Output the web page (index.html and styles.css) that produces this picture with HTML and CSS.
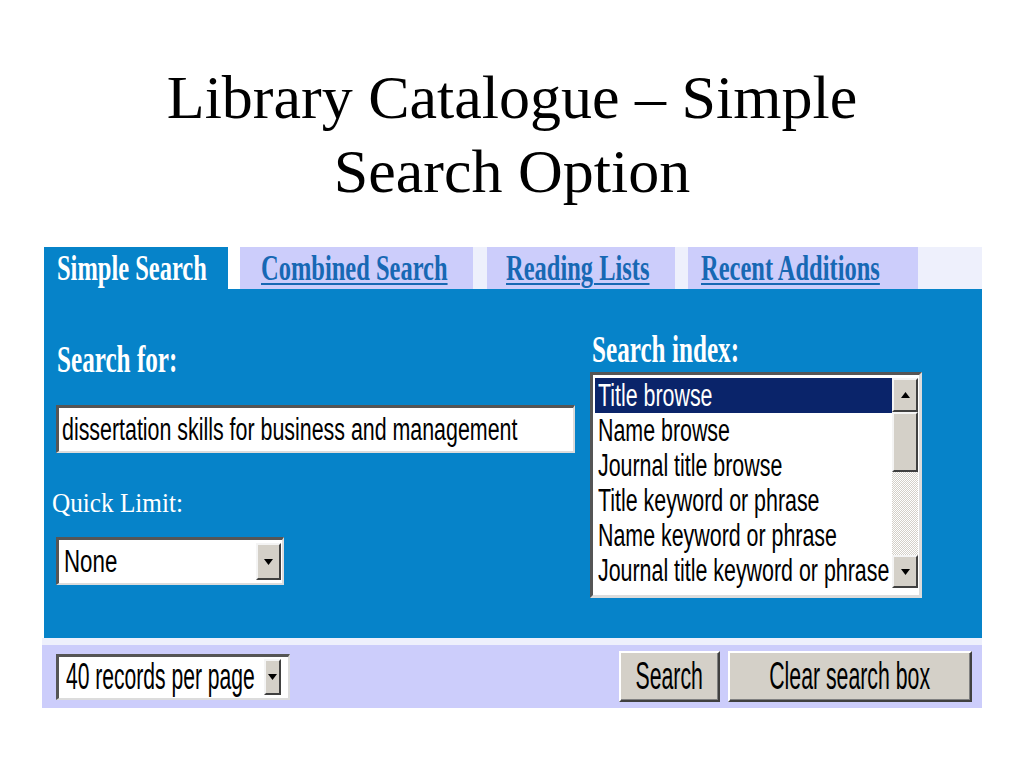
FILE: index.html
```html
<!DOCTYPE html>
<html lang="en">
<head>
    <meta charset="UTF-8">
    <title>Library Catalogue – Simple Search Option</title>
    <link rel="stylesheet" href="styles.css">
</head>
<body>
    <h1 class="title">Library Catalogue – Simple<br>Search Option</h1>

    <div class="catalogue">
        <div class="tabs">
            <div class="tab tab-current"><span class="squeeze">Simple Search</span></div>
            <div class="tab-gap tab-gap-white"></div>
            <div class="tab tab-combined"><a class="squeeze" href="#">Combined Search</a></div>
            <div class="tab-gap tab-gap-14"></div>
            <div class="tab tab-reading"><a class="squeeze" href="#">Reading Lists</a></div>
            <div class="tab-gap tab-gap-13"></div>
            <div class="tab tab-recent"><a class="squeeze" href="#">Recent Additions</a></div>
        </div>

        <div class="panel">
            <div class="col-left">
                <div class="label label-search"><span class="squeeze">Search for:</span></div>
                <div class="textbox"><span class="squeeze">dissertation skills for business and management</span></div>
                <div class="label-plain"><span class="squeeze">Quick Limit:</span></div>
                <div class="dropdown dropdown-limit">
                    <span class="squeeze">None</span>
                    <span class="drop-btn">
                        <svg width="9" height="6" viewBox="0 0 9 6"><polygon points="0,0 9,0 4.5,6" fill="#000"/></svg>
                    </span>
                </div>
            </div>

            <div class="col-right">
                <div class="label label-index"><span class="squeeze">Search index:</span></div>
                <div class="listbox">
                    <ul class="options">
                        <li class="selected"><span class="squeeze">Title browse</span></li>
                        <li><span class="squeeze">Name browse</span></li>
                        <li><span class="squeeze">Journal title browse</span></li>
                        <li><span class="squeeze">Title keyword or phrase</span></li>
                        <li><span class="squeeze">Name keyword or phrase</span></li>
                        <li><span class="squeeze">Journal title keyword or phrase</span></li>
                    </ul>
                    <div class="scrollbar">
                        <div class="sb-btn sb-up">
                            <svg width="9" height="6" viewBox="0 0 9 6"><polygon points="0,6 9,6 4.5,0" fill="#000"/></svg>
                        </div>
                        <div class="sb-thumb"></div>
                        <div class="sb-track"></div>
                        <div class="sb-btn sb-down">
                            <svg width="9" height="6" viewBox="0 0 9 6"><polygon points="0,0 9,0 4.5,6" fill="#000"/></svg>
                        </div>
                    </div>
                </div>
            </div>
        </div>

        <div class="stripe"></div>

        <div class="toolbar">
            <div class="dropdown dropdown-records">
                <span class="squeeze">40 records per page</span>
                <span class="drop-btn">
                    <svg width="9" height="6" viewBox="0 0 9 6"><polygon points="0,0 9,0 4.5,6" fill="#000"/></svg>
                </span>
            </div>
            <button class="btn btn-search"><span class="squeeze">Search</span></button>
            <button class="btn btn-clear"><span class="squeeze">Clear search box</span></button>
        </div>
    </div>
</body>
</html>
```

FILE: styles.css
```css
body {
    margin: 0;
    background: #fff;
    font-family: "Liberation Serif", "Times New Roman", serif;
    color: #000;
}
.title {
    margin: 60px 0 0;
    font-size: 62px;
    font-weight: normal;
    line-height: 74px;
    text-align: center;
}
.catalogue {
    margin: 39px 0 0 42px;
    width: 940px;
}
/* the old page text is squeezed sideways */
.squeeze {
    display: inline-block;
    white-space: nowrap;
    transform: scaleX(0.68);
    transform-origin: 0 50%;
}

/* tabs */
.tabs {
    display: flex;
    height: 42px;
    margin-left: 2px;
    background: #eef0fc;
}
.tab {
    flex: 0 0 auto;
    box-sizing: border-box;
    line-height: 42px;
    font-size: 36px;
    font-weight: bold;
    white-space: nowrap;
    background: #cccdfb;
}
.tab a {
    color: #1768b4;
    text-decoration: underline;
    text-decoration-thickness: 2px;
    text-underline-offset: 3px;
}
.tab-current {
    width: 184px;
    padding-left: 13px;
    background: #0683c9;
    color: #fff;
}
.tab-combined { width: 233px; padding-left: 21px; }
.tab-reading { width: 188px; padding-left: 19px; }
.tab-recent { width: 230px; padding-left: 13px; }
.tab-gap-white { width: 12px; background: #fff; }
.tab-gap-14 { width: 14px; }
.tab-gap-13 { width: 13px; }

/* blue panel */
.panel {
    display: grid;
    grid-template-columns: 523px 332px;
    column-gap: 15px;
    height: 349px;
    margin-left: 2px;
    padding-left: 8px;
    background: #0683c9;
}
.label {
    color: #fff;
    font-size: 37px;
    font-weight: bold;
    line-height: 40px;
}
.label-search {
    margin: 51px 0 0 5px;
}
.label-index {
    margin: 41px 0 0 2px;
}
.label-plain {
    margin-top: 35px;
    color: #fff;
    font-size: 28px;
    line-height: 30px;
}
.label-plain .squeeze {
    transform: scaleX(0.9);
}

/* form controls, windows classic look */
.textbox,
.dropdown {
    box-sizing: border-box;
    background: #fff;
    border-style: solid;
    border-width: 3px 2px 2px 3px;
    border-color: #555 #dcdcdc #dcdcdc #555;
    font-family: "Liberation Sans", Arial, sans-serif;
    font-size: 31px;
    white-space: nowrap;
    overflow: hidden;
}
.textbox .squeeze,
.options .squeeze {
    transform: scaleX(0.69);
}
.textbox {
    width: 519px;
    height: 48px;
    margin: 25px 0 0 4px;
    padding-left: 3px;
    line-height: 43px;
}
.dropdown {
    display: flex;
    align-items: center;
}
.dropdown .squeeze {
    flex: 1 1 0;
    min-width: 0;
}
.dropdown-limit {
    width: 228px;
    height: 48px;
    margin: 19px 0 0 4px;
    padding-left: 5px;
}
.dropdown-limit .squeeze {
    transform: scaleX(0.72);
}
.drop-btn {
    box-sizing: border-box;
    display: flex;
    flex: 0 0 auto;
    align-items: center;
    justify-content: center;
    width: 25px;
    height: 37px;
    margin-right: 1px;
    background: #d4d0c8;
    border: 2px solid;
    border-color: #f4f4f4 #404040 #404040 #f4f4f4;
}

.listbox {
    box-sizing: border-box;
    display: flex;
    align-items: flex-start;
    width: 332px;
    height: 226px;
    margin-top: 2px;
    padding: 3px 1px 0 2px;
    background: #fff;
    border-style: solid;
    border-width: 3px;
    border-color: #555 #dcdcdc #dcdcdc #555;
}
.options {
    width: 297px;
    margin: 0;
    padding: 0;
    list-style: none;
    font-family: "Liberation Sans", Arial, sans-serif;
    font-size: 31px;
}
.options li {
    height: 35px;
    padding-left: 3px;
    line-height: 36px;
    white-space: nowrap;
    overflow: hidden;
}
.options .selected {
    background: #0a246a;
    color: #fff;
}
.scrollbar {
    display: flex;
    flex-direction: column;
    width: 26px;
}
.sb-btn,
.sb-thumb {
    box-sizing: border-box;
    background: #d4d0c8;
    border: 2px solid;
    border-color: #f4f4f4 #404040 #404040 #f4f4f4;
}
.sb-btn {
    display: flex;
    align-items: center;
    justify-content: center;
}
.sb-up { height: 34px; }
.sb-down { height: 33px; }
.sb-thumb { height: 60px; }
.sb-track {
    height: 83px;
    background-image: repeating-conic-gradient(#d4d0c8 0% 25%, #fff 0% 50%);
    background-size: 2px 2px;
}

/* bottom bar */
.stripe {
    height: 7px;
    background: #eef0fc;
}
.toolbar {
    display: flex;
    align-items: center;
    height: 63px;
    padding: 0 10px 0 14px;
    background: #cccdfb;
}
.dropdown-records {
    width: 234px;
    height: 46px;
    padding-left: 7px;
    font-size: 37px;
}
.dropdown-records .squeeze {
    transform: scaleX(0.57);
}
.dropdown-records .drop-btn {
    width: 17px;
    height: 36px;
    margin-right: 7px;
}
.btn {
    box-sizing: border-box;
    display: flex;
    align-items: center;
    justify-content: center;
    height: 51px;
    padding: 0;
    background: #d4d0c8;
    border: 2px solid;
    border-color: #fff #404040 #404040 #fff;
    box-shadow: inset -1px -1px #808080;
    font-family: "Liberation Sans", Arial, sans-serif;
    font-size: 38px;
    color: #000;
    overflow: hidden;
}
.btn .squeeze {
    transform: scaleX(0.56);
    transform-origin: 50% 50%;
}
.btn-search {
    width: 101px;
    margin-left: auto;
}
.btn-clear {
    width: 244px;
    margin-left: 8px;
}
```
